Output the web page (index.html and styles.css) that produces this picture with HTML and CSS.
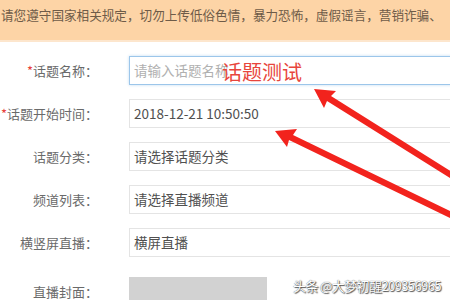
FILE: index.html
```html
<!DOCTYPE html>
<html lang="zh">
  <head>
    <meta charset="UTF-8">
    <title>创建话题</title>
    <link rel="stylesheet" href="styles.css">
  </head>
  <body>
    <div class="page">
      <div class="notice">请您遵守国家相关规定，切勿上传低俗色情，暴力恐怖，虚假谣言，营销诈骗、</div>

      <div class="form">
        <div class="row">
          <div class="label"><span class="req">*</span>话题名称：</div>
          <div class="field focus">
            <span class="placeholder">请输入话题名称</span>
            <span class="typed">话题测试</span>
          </div>
        </div>
        <div class="row">
          <div class="label"><span class="req">*</span>话题开始时间：</div>
          <div class="field">2018-12-21 10:50:50</div>
        </div>
        <div class="row">
          <div class="label">话题分类：</div>
          <div class="field">请选择话题分类</div>
        </div>
        <div class="row">
          <div class="label">频道列表：</div>
          <div class="field">请选择直播频道</div>
        </div>
        <div class="row">
          <div class="label">横竖屏直播：</div>
          <div class="field">横屏直播</div>
        </div>
        <div class="row">
          <div class="label">直播封面：</div>
          <div class="cover"></div>
        </div>
      </div>

      <svg class="arrows" width="450" height="300" viewBox="0 0 450 300">
        <polygon points="314,89 336,91 331,96 452,172 450,178 327,101 324,108" fill="#f2231d"/>
        <polygon points="275,131 297,129 293,135 452,212 450,218 289,140 287,147" fill="#f2231d"/>
      </svg>

      <div class="watermark">头条 @大梦初醒209356965</div>
    </div>
  </body>
</html>
```

FILE: styles.css
```css
html, body {
  margin: 0;
  padding: 0;
  background: #fff;
  font-family: "Noto Sans CJK SC", "Liberation Sans", sans-serif;
}
.page {
  position: relative;
  width: 450px;
  height: 300px;
  overflow: hidden;
}
.notice {
  height: 40px;
  line-height: 30px;
  padding-left: 1px;
  white-space: nowrap;
  font-size: 12.6px;
  color: #6e5b48;
  background: #fdd4a6;
  border-bottom: 2px solid #fde6cd;
}
.form {
  display: flex;
  flex-direction: column;
  gap: 14px;
  padding-top: 14px;
}
.row {
  display: flex;
  align-items: center;
  gap: 31px;
}
.label {
  width: 98px;
  flex: none;
  text-align: right;
  font-size: 13px;
  color: #6a6a6a;
  white-space: nowrap;
}
.req {
  color: #e8403a;
}
.field {
  position: relative;
  width: 340px;
  height: 27px;
  line-height: 27px;
  padding-left: 4px;
  border: 1px solid #e4e4e4;
  font-size: 13.5px;
  color: #505050;
  white-space: nowrap;
  flex: none;
}
.field.focus {
  border-color: #9cc6ea;
  box-shadow: 0 0 3px #c2dcf2;
}
.placeholder {
  color: #b0b0b0;
}
.typed {
  position: absolute;
  left: 92px;
  top: 0;
  font-size: 20px;
  line-height: 30px;
  color: #e8453c;
}
.cover {
  width: 138px;
  height: 34px;
  margin-top: 6px;
  background: #d2d2d2;
}
.arrows {
  position: absolute;
  left: 0;
  top: 0;
}
.watermark {
  position: absolute;
  left: 293px;
  top: 276px;
  font-size: 13px;
  letter-spacing: -0.6px;
  color: #fff;
  white-space: nowrap;
  text-shadow: 0 0 1px #333, 1px 1px 1px #555;
}
```
